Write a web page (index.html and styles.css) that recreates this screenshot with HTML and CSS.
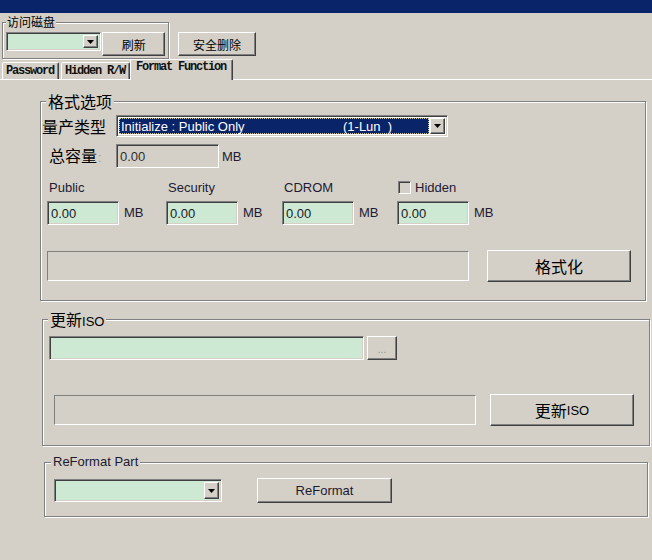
FILE: index.html
```html
<!DOCTYPE html>
<html>
<head>
<meta charset="utf-8">
<link rel="stylesheet" href="styles.css">
</head>
<body>
<div class="titlebar"></div>
<div class="toprow">
  <fieldset class="grp disk">
    <legend>访问磁盘</legend>
    <div class="diskrow">
      <div class="combo green c-disk"><div class="field"></div><span class="drop"><svg width="7" height="4" viewBox="0 0 7 4"><polygon points="0,0 7,0 3.5,4" fill="#000"/></svg></span></div>
      <div class="btn b-refresh">刷新</div>
    </div>
  </fieldset>
  <div class="btn b-del">安全删除</div>
</div>
<div class="tabs">
  <div class="tab">Password</div>
  <div class="tab">Hidden R/W</div>
  <div class="tab active">Format Function</div>
</div>
<div class="panel">
  <fieldset class="grp fmt">
    <legend class="cjk16">格式选项</legend>
    <div class="gbody fmt-body">
      <div class="r1">
        <span class="lbl cjk16">量产类型</span>
        <div class="combo c-type"><div class="sel"><span class="s1">Initialize : Public Only</span><span class="s2">(1-Lun  )</span></div><span class="drop"><svg width="7" height="4" viewBox="0 0 7 4"><polygon points="0,0 7,0 3.5,4" fill="#000"/></svg></span></div>
      </div>
      <div class="r2">
        <span class="lbl cap"><span class="cjk16">总容量</span><span class="colon">:</span></span>
        <div class="inp dis w-total">0.00</div>
        <span class="mb">MB</span>
      </div>
      <div class="parts">
        <div class="part">
          <span class="plabel">Public</span>
          <div class="pin"><div class="inp green">0.00</div><span class="mb">MB</span></div>
        </div>
        <div class="part">
          <span class="plabel">Security</span>
          <div class="pin"><div class="inp green">0.00</div><span class="mb">MB</span></div>
        </div>
        <div class="part">
          <span class="plabel">CDROM</span>
          <div class="pin"><div class="inp green">0.00</div><span class="mb">MB</span></div>
        </div>
        <div class="part">
          <span class="plabel chk"><span class="box"></span>Hidden</span>
          <div class="pin"><div class="inp green">0.00</div><span class="mb">MB</span></div>
        </div>
      </div>
      <div class="r5">
        <div class="static s-fmt"></div>
        <div class="btn big b-fmt cjk16">格式化</div>
      </div>
    </div>
  </fieldset>

  <fieldset class="grp iso">
    <legend><span class="cjk16">更新</span>ISO</legend>
    <div class="gbody iso-body">
      <div class="isorow1">
        <div class="inp green w-iso"></div>
        <div class="btn b-dots">...</div>
      </div>
      <div class="isorow2">
        <div class="static s-iso"></div>
        <div class="btn big b-iso"><span class="cjk16">更新</span>ISO</div>
      </div>
    </div>
  </fieldset>

  <fieldset class="grp ref">
    <legend>ReFormat Part</legend>
    <div class="gbody ref-body">
      <div class="combo green c-ref"><div class="field"></div><span class="drop"><svg width="7" height="4" viewBox="0 0 7 4"><polygon points="0,0 7,0 3.5,4" fill="#000"/></svg></span></div>
      <div class="btn b-ref">ReFormat</div>
    </div>
  </fieldset>
</div>
</body>
</html>
```

FILE: styles.css
```css
* { box-sizing: border-box; }
html, body { margin: 0; }
body {
  background: #d4d0c8;
  width: 652px;
  height: 560px;
  overflow: hidden;
  font-family: "Liberation Sans", "Noto Sans CJK SC", sans-serif;
  font-size: 13px;
  color: #000;
}
.cjk16 { font-family: "Noto Sans CJK SC", "Liberation Sans", sans-serif; font-size: 16px; }

.titlebar { height: 13px; background: #0a246a; }

/* group boxes */
.grp {
  margin: 0;
  padding: 0;
  min-width: 0;
  border: 1px solid #808080;
  box-shadow: inset 1px 1px 0 #fff, 1px 1px 0 #fff;
}
.grp > legend {
  background: #d4d0c8;
  height: 16px;
  line-height: 16px;
  padding: 0 2px;
  margin-left: 5px;
  color: #000;
  white-space: nowrap;
}

/* top row */
.toprow { display: flex; align-items: flex-start; padding-left: 2px; margin-top: 1px; }
.disk { width: 167px; padding: 2px 3px 2px 3px; }
.disk > legend { font-family: "Noto Sans CJK SC", sans-serif; font-size: 12px; margin-left: 0; padding: 0 1px; }
.diskrow { display: flex; align-items: flex-start; gap: 1px; }

/* combo */
.combo {
  display: flex;
  padding: 2px;
  border: 1px solid;
  border-color: #808080 #fff #fff #808080;
  box-shadow: inset 1px 1px 0 #404040, inset -1px -1px 0 #d4d0c8;
  background: #fff;
}
.combo.green { background: #cde8d3; }
.combo .field { flex: 1; }
.drop {
  width: 15px;
  flex: none;
  display: flex;
  align-items: center;
  justify-content: center;
  background: #d4d0c8;
  border: 1px solid;
  border-color: #fff #404040 #404040 #fff;
  box-shadow: inset -1px -1px 0 #808080;
}
.drop svg { display: block; }
.c-disk { width: 96px; height: 19px; }
.c-type { width: 332px; height: 22px; }
.c-ref { width: 168px; height: 23px; }

.sel {
  flex: 1;
  margin-right: 1px;
  background: #0a246a;
  color: #fff;
  border: 1px dotted #c9c6a8;
  display: flex;
  align-items: center;
  padding-left: 1px;
  white-space: pre;
  font-size: 13px;
}
.sel .s1 { width: 222px; }

/* buttons */
.btn {
  display: flex;
  align-items: center;
  justify-content: center;
  background: #d4d0c8;
  border: 1px solid;
  border-color: #fff #404040 #404040 #fff;
  box-shadow: inset -1px -1px 0 #808080;
  color: #000;
  white-space: nowrap;
}
.b-refresh { width: 63px; height: 24px; font-family: "Noto Sans CJK SC", sans-serif; font-size: 12px; }
.b-del { width: 78px; height: 24px; margin-left: 9px; margin-top: 18px; font-family: "Noto Sans CJK SC", sans-serif; font-size: 12px; }
.big { width: 144px; height: 32px; }
.b-dots { width: 30px; height: 24px; margin-left: 3px; color: #909090; font-size: 10px; padding-top: 3px; }
.b-ref { width: 135px; height: 25px; margin-left: 35px; color: #201a30; }

/* tabs */
.tabs { display: flex; align-items: flex-end; height: 20px; padding-left: 2px; position: relative; z-index: 1; }
.tab {
  height: 17px;
  border: 1px solid;
  border-bottom: 0;
  border-color: #fff #404040 transparent #fff;
  box-shadow: inset -1px 0 0 #808080;
  border-radius: 2px 2px 0 0;
  font-family: "Liberation Mono", monospace;
  font-weight: bold;
  font-size: 12px;
  letter-spacing: -1.2px;
  line-height: 16px;
  padding: 0 4px 0 3px;
  margin-right: 2px;
  background: #d4d0c8;
  color: #111;
}
.tab.active { height: 21px; margin: 0 0 -1px -2px; padding: 0 6px 0 5px; line-height: 14px; }
.panel { border-top: 1px solid #fff; }

/* inputs */
.inp {
  height: 24px;
  border: 1px solid;
  border-color: #808080 #fff #fff #808080;
  box-shadow: inset 1px 1px 0 #404040, inset -1px -1px 0 #d4d0c8;
  padding: 0 3px;
  display: flex;
  align-items: center;
  font-size: 13px;
  color: #1a1a2a;
}
.inp.green { background: #cde8d3; width: 72px; }
.inp.dis { background: #d4d0c8; color: #303030; }
.w-total { width: 103px; }
.static {
  height: 30px;
  border: 1px solid;
  border-color: #808080 #fff #fff #808080;
}
.mb { margin-left: 5px; margin-top: 4px; color: #221a33; align-self: flex-start; }

/* format group */
.fmt { margin: 13px 0 0 40px; width: 606px; padding: 6px 0 18px 0; }
.fmt-body { padding-left: 1px; }
.r1 { display: flex; align-items: center; height: 22px; }
.lbl { width: 74px; flex: none; line-height: 16px; }
.r2 { display: flex; align-items: flex-start; margin-top: 7px; }
.r2 .lbl { padding-left: 7px; align-self: center; }
.r2 .mb { margin-left: 3px; margin-top: 5px; }
.colon { color: #a0a0a0; font-size: 13px; margin-left: 1px; }
.parts {
  display: grid;
  grid-template-columns: 119px 116px 115px 1fr;
  margin-top: 12px;
  padding-left: 5px;
}
.part { display: flex; flex-direction: column; }
.plabel { line-height: 15px; height: 15px; padding-left: 2px; color: #221a33; display: flex; align-items: center; }
.pin { display: flex; margin-top: 6px; }
.chk { padding-left: 1px; }
.box {
  width: 13px;
  height: 13px;
  margin-right: 4px;
  border: 1px solid;
  border-color: #808080 #fff #fff #808080;
  box-shadow: inset 1px 1px 0 #404040, inset -1px -1px 0 #d4d0c8;
  background: #d4d0c8;
}
.r5 { display: flex; align-items: center; margin-top: 25px; padding-left: 5px; }
.s-fmt { width: 422px; }
.b-fmt { margin-left: 18px; }

/* iso group */
.iso { margin: 10px 0 0 42px; width: 608px; padding: 9px 0 19px 0; }
.iso > legend { margin-left: 5px; }
.iso-body { padding-left: 6px; }
.isorow1 { display: flex; align-items: center; }
.w-iso { width: 315px !important; }
.isorow2 { display: flex; align-items: center; margin-top: 34px; padding-left: 5px; }
.s-iso { width: 422px; }
.b-iso { margin-left: 14px; }

/* reformat group */
.ref { margin: 8px 0 0 44px; width: 604px; padding: 8px 0 13px 0; }
.ref > legend { margin-left: 6px; color: #201a30; }
.ref-body { display: flex; align-items: center; padding-left: 9px; }
```
